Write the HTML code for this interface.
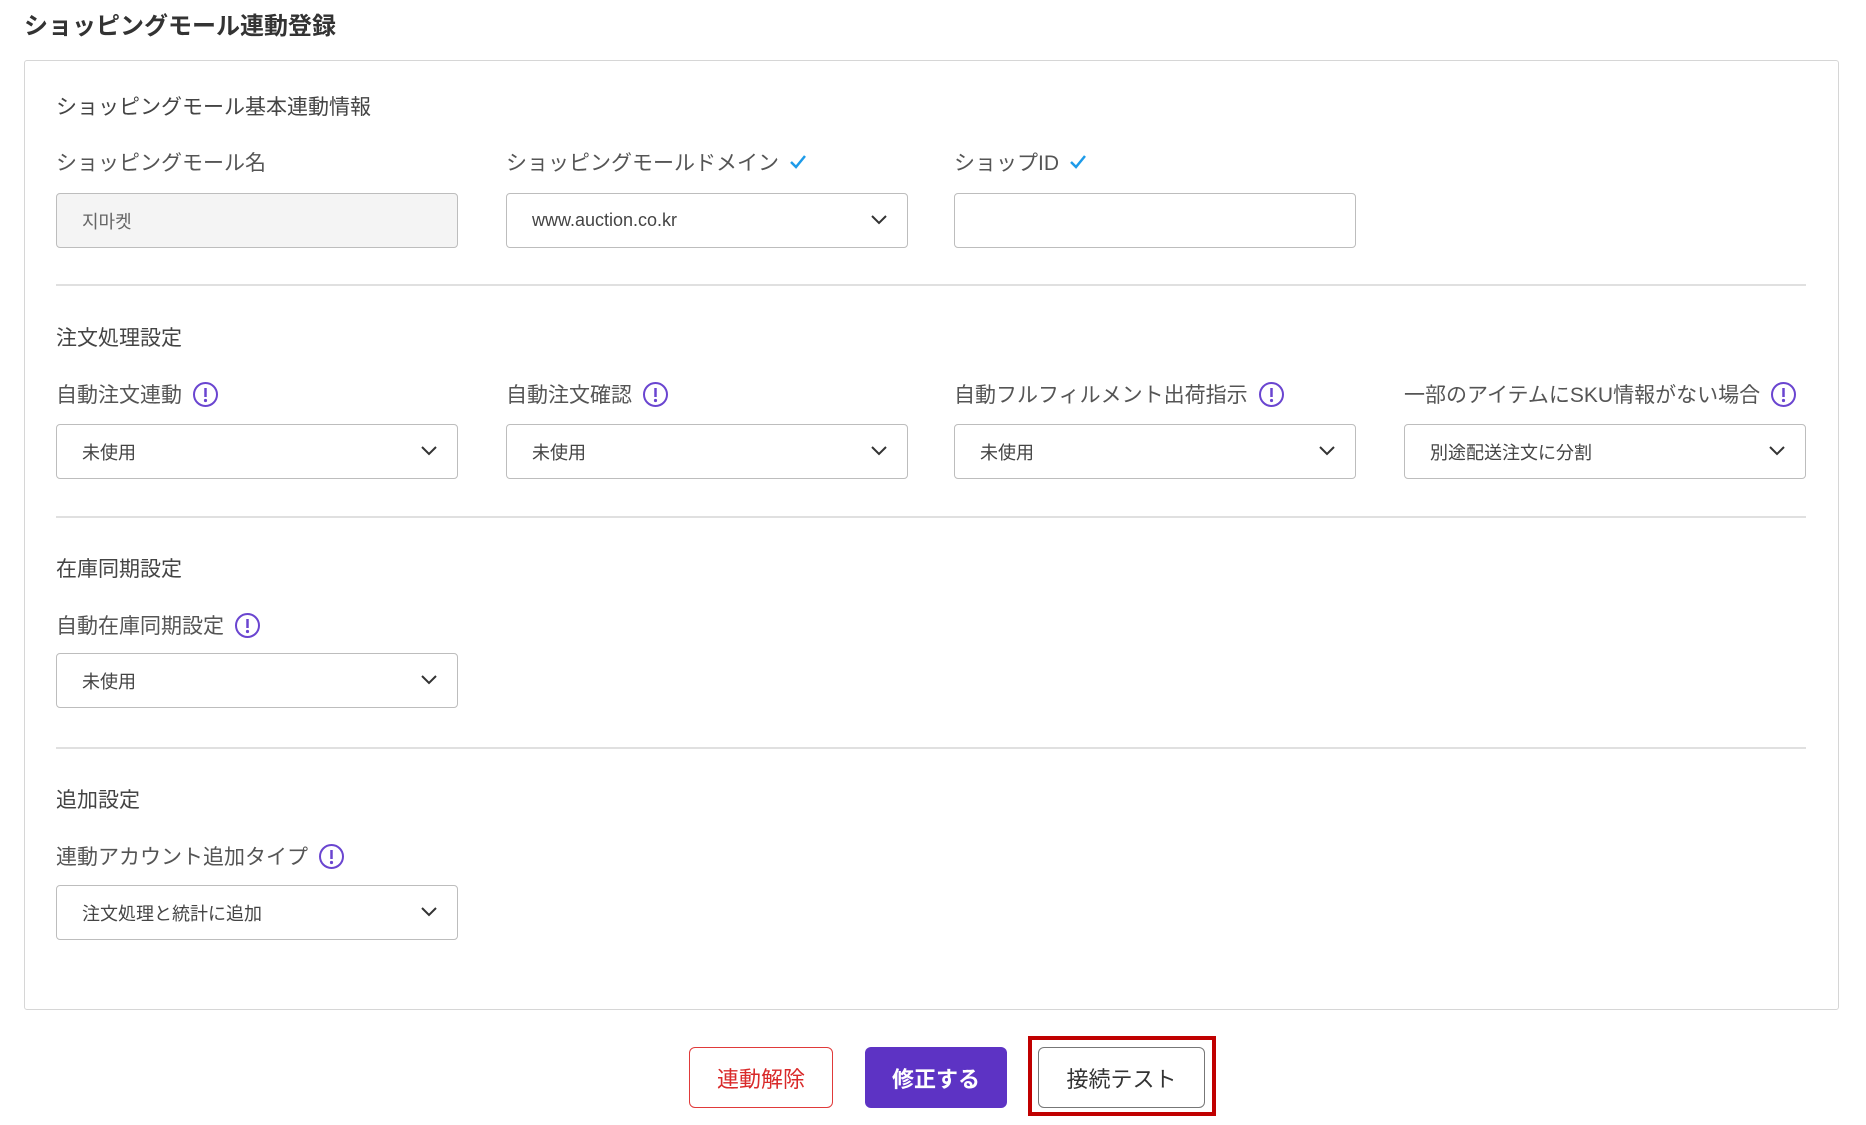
<!DOCTYPE html>
<html><head><meta charset="utf-8"><style>
*{box-sizing:border-box;margin:0;padding:0}
body{width:1866px;height:1125px;background:#fff;font-family:"Liberation Sans","Noto Sans CJK JP",sans-serif;color:#333;position:relative;overflow:hidden}
.a{position:absolute;white-space:nowrap}
.title{left:24px;top:6px;font-size:24px;font-weight:bold;color:#333}
.card{left:24px;top:60px;width:1815px;height:950px;border:1.5px solid #d6d6d6;border-radius:3px}
.h{font-size:21px;color:#444}
.lbl{font-size:21px;color:#555;display:flex;align-items:center;gap:10px}
.box{width:402px;height:55px;border:1.5px solid #bdbdbd;border-radius:4px;font-size:18px;color:#444;padding-left:25px;display:flex;align-items:center;background:#fff}
.box.dis{background:#f4f4f4;color:#666}
.box svg.ch{position:absolute;right:20px;top:21px}
.div{height:2px;background:#e0e0e0;left:56px;width:1750px}
.btn{height:61px;border-radius:6px;font-size:22px;display:flex;align-items:center;justify-content:center}
</style></head><body>
<div class="a title">ショッピングモール連動登録</div>
<div class="a card"></div>

<div class="a h" style="left:56px;top:91px">ショッピングモール基本連動情報</div>
<div class="a lbl" style="left:56px;top:147px">ショッピングモール名</div>
<div class="a lbl" style="left:506px;top:147px">ショッピングモールドメイン <svg width="18" height="16" viewBox="0 0 18 16"><path d="M2 8l5 5 9-11" fill="none" stroke="#1e9be9" stroke-width="2.5"/></svg></div>
<div class="a lbl" style="left:954px;top:147px">ショップID <svg width="18" height="16" viewBox="0 0 18 16"><path d="M2 8l5 5 9-11" fill="none" stroke="#1e9be9" stroke-width="2.5"/></svg></div>
<div class="a box dis" style="left:56px;top:193px">지마켓</div>
<div class="a box" style="left:506px;top:193px">www.auction.co.kr<svg class="ch" width="16" height="10" viewBox="0 0 16 10"><path d="M1 1l7 7 7-7" fill="none" stroke="#333" stroke-width="2"/></svg></div>
<div class="a box" style="left:954px;top:193px"></div>
<div class="a div" style="top:284px"></div>

<div class="a h" style="left:56px;top:322px">注文処理設定</div>
<div class="a lbl" style="left:56px;top:379px">自動注文連動 <svg width="27" height="27" viewBox="0 0 27 27"><circle cx="13.5" cy="13.5" r="11.5" fill="none" stroke="#6a45d0" stroke-width="2"/><path d="M13.5 7v9" stroke="#6a45d0" stroke-width="2.5"/><circle cx="13.5" cy="19.5" r="1.6" fill="#6a45d0"/></svg></div>
<div class="a lbl" style="left:506px;top:379px">自動注文確認 <svg width="27" height="27" viewBox="0 0 27 27"><circle cx="13.5" cy="13.5" r="11.5" fill="none" stroke="#6a45d0" stroke-width="2"/><path d="M13.5 7v9" stroke="#6a45d0" stroke-width="2.5"/><circle cx="13.5" cy="19.5" r="1.6" fill="#6a45d0"/></svg></div>
<div class="a lbl" style="left:954px;top:379px">自動フルフィルメント出荷指示 <svg width="27" height="27" viewBox="0 0 27 27"><circle cx="13.5" cy="13.5" r="11.5" fill="none" stroke="#6a45d0" stroke-width="2"/><path d="M13.5 7v9" stroke="#6a45d0" stroke-width="2.5"/><circle cx="13.5" cy="19.5" r="1.6" fill="#6a45d0"/></svg></div>
<div class="a lbl" style="left:1404px;top:379px">一部のアイテムにSKU情報がない場合 <svg width="27" height="27" viewBox="0 0 27 27"><circle cx="13.5" cy="13.5" r="11.5" fill="none" stroke="#6a45d0" stroke-width="2"/><path d="M13.5 7v9" stroke="#6a45d0" stroke-width="2.5"/><circle cx="13.5" cy="19.5" r="1.6" fill="#6a45d0"/></svg></div>
<div class="a box" style="left:56px;top:424px">未使用<svg class="ch" width="16" height="10" viewBox="0 0 16 10"><path d="M1 1l7 7 7-7" fill="none" stroke="#333" stroke-width="2"/></svg></div>
<div class="a box" style="left:506px;top:424px">未使用<svg class="ch" width="16" height="10" viewBox="0 0 16 10"><path d="M1 1l7 7 7-7" fill="none" stroke="#333" stroke-width="2"/></svg></div>
<div class="a box" style="left:954px;top:424px">未使用<svg class="ch" width="16" height="10" viewBox="0 0 16 10"><path d="M1 1l7 7 7-7" fill="none" stroke="#333" stroke-width="2"/></svg></div>
<div class="a box" style="left:1404px;top:424px">別途配送注文に分割<svg class="ch" width="16" height="10" viewBox="0 0 16 10"><path d="M1 1l7 7 7-7" fill="none" stroke="#333" stroke-width="2"/></svg></div>
<div class="a div" style="top:516px"></div>

<div class="a h" style="left:56px;top:553px">在庫同期設定</div>
<div class="a lbl" style="left:56px;top:610px">自動在庫同期設定 <svg width="27" height="27" viewBox="0 0 27 27"><circle cx="13.5" cy="13.5" r="11.5" fill="none" stroke="#6a45d0" stroke-width="2"/><path d="M13.5 7v9" stroke="#6a45d0" stroke-width="2.5"/><circle cx="13.5" cy="19.5" r="1.6" fill="#6a45d0"/></svg></div>
<div class="a box" style="left:56px;top:653px">未使用<svg class="ch" width="16" height="10" viewBox="0 0 16 10"><path d="M1 1l7 7 7-7" fill="none" stroke="#333" stroke-width="2"/></svg></div>
<div class="a div" style="top:747px"></div>

<div class="a h" style="left:56px;top:784px">追加設定</div>
<div class="a lbl" style="left:56px;top:841px">連動アカウント追加タイプ <svg width="27" height="27" viewBox="0 0 27 27"><circle cx="13.5" cy="13.5" r="11.5" fill="none" stroke="#6a45d0" stroke-width="2"/><path d="M13.5 7v9" stroke="#6a45d0" stroke-width="2.5"/><circle cx="13.5" cy="19.5" r="1.6" fill="#6a45d0"/></svg></div>
<div class="a box" style="left:56px;top:885px">注文処理と統計に追加<svg class="ch" width="16" height="10" viewBox="0 0 16 10"><path d="M1 1l7 7 7-7" fill="none" stroke="#333" stroke-width="2"/></svg></div>

<div class="a btn" style="left:689px;top:1047px;width:144px;border:1.5px solid #e03a3a;color:#d92a2a">連動解除</div>
<div class="a btn" style="left:865px;top:1047px;width:142px;background:#5d33c4;color:#fff;font-weight:bold">修正する</div>
<div class="a" style="left:1028px;top:1036px;width:188px;height:80px;border:4px solid #c00000"></div>
<div class="a btn" style="left:1038px;top:1047px;width:167px;border:1.5px solid #777;color:#333">接続テスト</div>
</body></html>
